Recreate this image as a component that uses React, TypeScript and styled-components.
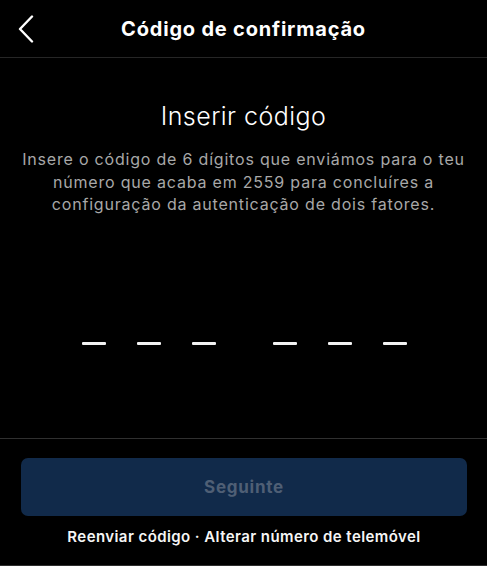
import React from "react";
import styled, { createGlobalStyle } from "styled-components";

const Global = createGlobalStyle`
  html, body { margin: 0; padding: 0; background: #000; }
  body { font-family: Inter, "Liberation Sans", Arial, sans-serif; -webkit-font-smoothing: antialiased; }
`;

const Page = styled.div`
  width: 487px;
  height: 566px;
  background: #000;
  display: flex;
  flex-direction: column;
  box-sizing: border-box;
  border-bottom: 1px solid #2e2e2e;
  overflow: hidden;
`;

const Header = styled.header`
  height: 57px;
  flex: none;
  display: grid;
  grid-template-columns: 1fr auto 1fr;
  align-items: center;
  border-bottom: 1px solid #262626;
`;

const BackButton = styled.button`
  justify-self: start;
  background: none;
  border: 0;
  padding: 0 0 0 17px;
  height: 30px;
  display: flex;
  align-items: center;
  cursor: pointer;
`;

const Title = styled.h1`
  margin: 0;
  color: #fff;
  font-size: 20px;
  font-weight: 700;
  letter-spacing: 0.8px;
`;

const Main = styled.main`
  flex: 1;
  display: flex;
  flex-direction: column;
  align-items: center;
  padding: 43px 10px 0;
  border-bottom: 1px solid #303030;
`;

const Heading = styled.h2`
  margin: 0;
  color: #fff;
  font-size: 25px;
  line-height: 30px;
  font-weight: 300;
  letter-spacing: 0.45px;
`;

const Description = styled.p`
  margin: 17px 0 0;
  color: #a8a8a8;
  font-size: 16px;
  line-height: 22.5px;
  text-align: center;
  white-space: nowrap;
  letter-spacing: 0.8px;
`;

const CodeRow = styled.div`
  margin-top: 126px;
  display: flex;
  align-items: center;
  gap: 57px;
  padding-left: 2px;
`;

const CodeGroup = styled.div`
  display: flex;
  gap: 31px;
`;

const Slot = styled.span`
  display: block;
  width: 24px;
  height: 3px;
  border-radius: 1px;
  background: #f2f2f2;
`;

const Footer = styled.footer`
  flex: none;
  display: flex;
  flex-direction: column;
  align-items: stretch;
  padding: 19px 20px 0 21px;
  height: 126px;
  box-sizing: border-box;
`;

const PrimaryButton = styled.button`
  height: 58px;
  border: 0;
  border-radius: 7px;
  background: #112a4a;
  color: #4f5f75;
  font-family: inherit;
  font-size: 17px;
  font-weight: 700;
  letter-spacing: 0.75px;
`;

const Links = styled.div`
  margin-top: 11px;
  text-align: center;
  color: #f5f5f5;
  font-size: 15px;
  font-weight: 600;
  letter-spacing: 0.42px;
`;

export default function App() {
  return (
    <>
      <Global />
      <Page>
        <Header>
          <BackButton aria-label="Voltar">
            <svg width="18" height="28" viewBox="0 0 18 28" fill="none">
              <path d="M15 1.5 L3 14 L15 26.5" stroke="#fff" strokeWidth="2.4" strokeLinecap="round" strokeLinejoin="round" />
            </svg>
          </BackButton>
          <Title>Código de confirmação</Title>
          <span />
        </Header>
        <Main>
          <Heading>Inserir código</Heading>
          <Description>
            Insere o código de 6 dígitos que enviámos para o teu
            <br />
            número que acaba em 2559 para concluíres a
            <br />
            configuração da autenticação de dois fatores.
          </Description>
          <CodeRow>
            <CodeGroup>
              <Slot />
              <Slot />
              <Slot />
            </CodeGroup>
            <CodeGroup>
              <Slot />
              <Slot />
              <Slot />
            </CodeGroup>
          </CodeRow>
        </Main>
        <Footer>
          <PrimaryButton disabled>Seguinte</PrimaryButton>
          <Links>Reenviar código · Alterar número de telemóvel</Links>
        </Footer>
      </Page>
    </>
  );
}
